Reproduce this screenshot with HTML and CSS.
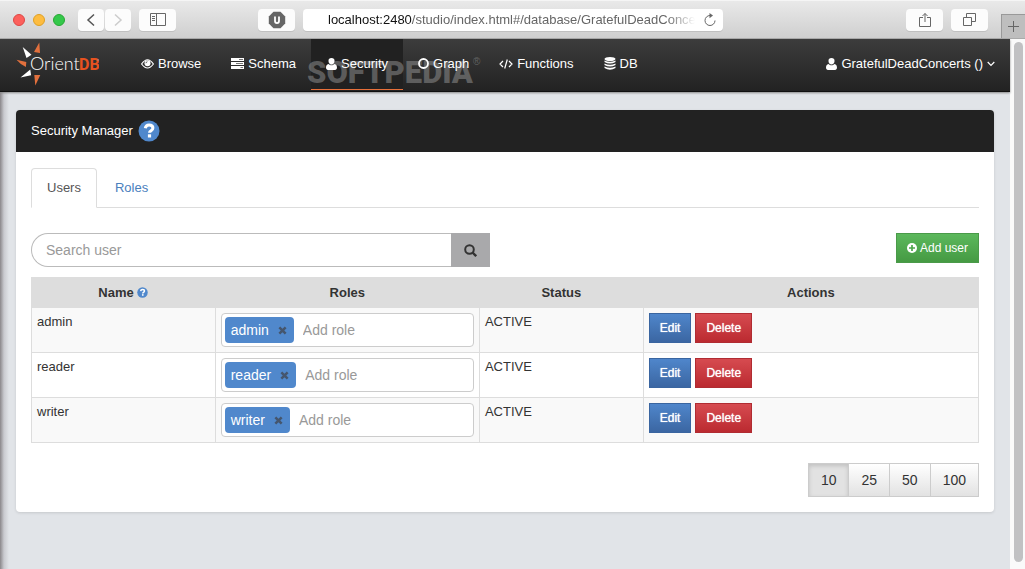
FILE: index.html
```html
<!DOCTYPE html>
<html lang="en">
<head>
<meta charset="utf-8">
<title>OrientDB Studio - Security Manager</title>
<link rel="stylesheet" href="styles.css">
</head>
<body>
<svg class="sprite" aria-hidden="true">
  <symbol id="i-user" viewBox="0 0 11 12"><path d="M5.500 0a3 3 0 0 1 3 3.200c0 1.700-1.300 3.300-3 3.300s-3-1.600-3-3.300a3 3 0 0 1 3-3.200zM2.600 6c.8.800 1.800 1.300 2.900 1.300S7.600 6.800 8.400 6C10.300 6.200 11 7.800 11 9.800c0 1.200-.8 2.200-2 2.200H2c-1.200 0-2-1-2-2.200C0 7.800.7 6.200 2.600 6z"/></symbol>
  <symbol id="i-help" viewBox="0 0 22 22"><circle cx="11" cy="11" r="10.500"/><path d="M7.300 8.300C7.600 5.900 9 4.900 11.100 4.900c2.200 0 3.800 1.200 3.800 3.100 0 2.700-3.400 2.600-3.400 4.800" fill="none" stroke="#fff" stroke-width="3"/><path d="M9.900 14.300h3.200v3.200H9.900z" fill="#fff"/></symbol>
  <symbol id="i-x" viewBox="0 0 10 10"><path d="M1.500 1.500l7 7m0-7l-7 7" stroke="currentColor" stroke-width="2.800"/></symbol>
</svg>

<header class="chrome">
  <div class="lights"><span class="light red"></span><span class="light yellow"></span><span class="light green"></span></div>
  <div class="history">
    <button class="tool small" aria-label="Back"><svg width="10" height="14" viewBox="0 0 10 14"><path d="M8 1.500L2 7l6 5.500" class="line strong"/></svg></button>
    <button class="tool small" aria-label="Forward"><svg width="10" height="14" viewBox="0 0 10 14"><path d="M2 1.500L8 7l-6 5.500" class="line faint"/></svg></button>
  </div>
  <button class="tool sidebar" aria-label="Sidebar"><svg width="16" height="13" viewBox="0 0 16 13"><path d="M.5.500h15v12H.5zM6.500.500v12M2 3.500h3M2 5.500h3M2 7.500h3" class="line"/></svg></button>
  <button class="tool shield" aria-label="Blocker"><svg width="18" height="18" viewBox="0 0 18 18"><path d="M5.500.800h7l4.700 4.700v7l-4.700 4.700h-7L.8 12.500v-7z" fill="#666"/><path d="M7 5.500V10c0 2.700 4 2.700 4 0V5.500" fill="none" stroke="#fff" stroke-width="1.800"/></svg></button>
  <div class="address">
    <span class="url"><b>localhost:2480</b>/studio/index.html#/database/GratefulDeadConcerts</span>
    <button class="reload" aria-label="Reload"><svg width="14" height="14" viewBox="0 0 14 14"><path d="M8.500 2.500H7a5 5 0 1 0 5 5" class="line"/><path d="M6.500 0l3.500 2.600-3.500 2.600z" fill="#666"/></svg></button>
  </div>
  <div class="right-tools">
    <button class="tool" aria-label="Share"><svg width="12" height="16" viewBox="0 0 12 16"><path d="M4 5.500H.5v9h11v-9H8M6 10V1.500M3.500 4L6 1.500 8.500 4" class="line"/></svg></button>
    <button class="tool" aria-label="Tabs"><svg width="13" height="13" viewBox="0 0 13 13"><path d="M.5 4.500h8v8h-8zM3.500 4V.5h9v8H9" class="line"/></svg></button>
  </div>
  <button class="newtab" aria-label="New tab"><svg width="11" height="11" viewBox="0 0 11 11"><path d="M5.500 0v11M0 5.500h11" class="line"/></svg></button>
</header>

<div class="viewport">
  <div class="page">
    <nav class="navbar">
      <a class="brand" href="#" aria-label="OrientDB">
        <svg width="84" height="46" viewBox="0 0 84 46">
          <g fill="#e2703d"><path d="M24.300.500L25 11l-6-1zM1.500 17.700L11.300 20l-.4 5Q6 23 1.500 17.700zM19.300 33h6l-5 10.500z"/></g>
          <g fill="#fff"><path d="M7.700 5l8.800 7.700-5 3.200zM5.500 35.600l9.800-8 .8 5.600z"/></g>
          <text x="15" y="28" class="logo-light">Orient</text>
          <text x="64" y="28" class="logo-bold">DB</text>
          <circle cx="83" cy="18" r=".8" fill="#999"/>
        </svg>
      </a>
      <a class="item" href="#"><svg width="13" height="10" viewBox="0 0 13 10"><path d="M.6 5Q6.500-3.500 12.400 5 6.500 13 .6 5z" fill="none" stroke="#fff" stroke-width="1.200"/><circle cx="6.500" cy="4.300" r="3" fill="#fff"/><path d="M5 4.200Q5 2.800 6.400 2.700" stroke="#333" fill="none" stroke-width=".8"/></svg>Browse</a>
      <a class="item" href="#"><svg width="13" height="11" viewBox="0 0 13 11"><path d="M0 0h13v3H0zM0 4h13v3H0zM0 8h13v3H0z" fill="#fff"/><path d="M8 1.500h4M5 5.500h7M9.500 9.500H12" stroke="#777"/></svg>Schema</a>
      <a class="item active" href="#" aria-current="page"><svg width="11" height="12"><use href="#i-user"/></svg>Security</a>
      <a class="item" href="#"><svg width="11" height="11" viewBox="0 0 11 11"><circle cx="5.500" cy="5.500" r="4.500" fill="none" stroke="#fff" stroke-width="1.800"/></svg>Graph</a>
      <a class="item" href="#"><svg width="14" height="10" viewBox="0 0 14 10"><path d="M4 2L1 5l3 3M10 2l3 3-3 3M8.300.500L5.700 9.500" fill="none" stroke="#fff" stroke-width="1.200"/></svg>Functions</a>
      <a class="item" href="#"><svg width="12" height="13" viewBox="0 0 12 13"><g fill="#fff"><ellipse cx="6" cy="2" rx="5.500" ry="2"/><path d="M.5 3.500q5.500 2.600 11 0v1.600q-5.500 3-11 0zM.5 6.500q5.500 2.600 11 0v1.600q-5.500 3-11 0zM.5 9.500q5.500 2.600 11 0v1.600q-5.500 3.300-11 0z"/></g></svg>DB</a>
      <a class="item account" href="#"><svg width="11" height="12"><use href="#i-user"/></svg>GratefulDeadConcerts ()<svg width="8" height="6" viewBox="0 0 8 6"><path d="M.7 1L4 4.500 7.300 1" fill="none" stroke="#fff" stroke-width="1.200"/></svg></a>
      <span class="watermark">SOFTPEDIA<sup>®</sup></span>
    </nav>

    <main class="panel">
      <h1 class="panel-title">Security Manager <svg class="help" width="22" height="22"><use href="#i-help"/></svg></h1>
      <div class="panel-body">
        <div class="tabs"><a class="tab current" href="#">Users</a><a class="tab" href="#">Roles</a></div>
        <div class="controls">
          <form class="search">
            <input type="text" placeholder="Search user" aria-label="Search user">
            <button type="button" aria-label="Search"><svg width="13" height="13" viewBox="0 0 13 13"><circle cx="5.500" cy="5.500" r="4.300" fill="none" stroke="#333" stroke-width="2"/><path d="M8.500 8.500l3.700 3.700" stroke="#333" stroke-width="2.400"/></svg></button>
          </form>
          <button class="btn green"><svg width="10" height="10" viewBox="0 0 10 10"><circle cx="5" cy="5" r="5" fill="#fff"/><path d="M5 2v6M2 5h6" stroke="#4ea64c" stroke-width="1.700"/></svg>Add user</button>
        </div>
        <table class="users">
          <colgroup><col class="c-name"><col class="c-roles"><col class="c-status"><col></colgroup>
          <thead><tr><th>Name <svg class="help small" width="11" height="11"><use href="#i-help"/></svg></th><th>Roles</th><th>Status</th><th>Actions</th></tr></thead>
          <tbody>
            <tr><td>admin</td><td><div class="roles"><span class="chip">admin<button aria-label="Remove admin"><svg width="9" height="9"><use href="#i-x"/></svg></button></span><input type="text" placeholder="Add role" aria-label="Add role to admin"></div></td><td>ACTIVE</td><td><div class="actions"><button class="btn blue">Edit</button><button class="btn red">Delete</button></div></td></tr>
            <tr><td>reader</td><td><div class="roles"><span class="chip">reader<button aria-label="Remove reader"><svg width="9" height="9"><use href="#i-x"/></svg></button></span><input type="text" placeholder="Add role" aria-label="Add role to reader"></div></td><td>ACTIVE</td><td><div class="actions"><button class="btn blue">Edit</button><button class="btn red">Delete</button></div></td></tr>
            <tr><td>writer</td><td><div class="roles"><span class="chip">writer<button aria-label="Remove writer"><svg width="9" height="9"><use href="#i-x"/></svg></button></span><input type="text" placeholder="Add role" aria-label="Add role to writer"></div></td><td>ACTIVE</td><td><div class="actions"><button class="btn blue">Edit</button><button class="btn red">Delete</button></div></td></tr>
          </tbody>
        </table>
        <div class="pager"><button class="on">10</button><button>25</button><button>50</button><button>100</button></div>
      </div>
    </main>
  </div>
  <div class="scrollbar"><div class="thumb"></div></div>
</div>
</body>
</html>
```

FILE: styles.css
```css
* { box-sizing: border-box; }
body {
  margin: 0;
  min-height: 100vh;
  display: flex;
  flex-direction: column;
  font: 13px/18px "Liberation Sans", Arial, sans-serif;
  color: #333;
  background: #fff;
}
button, input { font: inherit; color: inherit; margin: 0; }
button { border: 0; padding: 0; background: none; }
a { text-decoration: none; color: inherit; }
svg { flex: none; }
.sprite { position: absolute; width: 0; height: 0; }
.line { fill: none; stroke: #666; stroke-width: 1; }
.line.strong { stroke: #555; stroke-width: 1.500; }
.line.faint { stroke: #ccc; stroke-width: 1.500; }

/* Browser toolbar */
.chrome {
  display: flex;
  align-items: center;
  height: 39px;
  padding-left: 13px;
  background: linear-gradient(#e9e9e9, #cfcfcf);
  border-top: 1px solid #f5f5f5;
  border-bottom: 1px solid #aaa;
}
.lights { display: flex; gap: 8px; }
.light { width: 12px; height: 12px; border-radius: 50%; border: 1px solid; }
.light.red { background: #fc605c; border-color: #dd4744; }
.light.yellow { background: #fdbc40; border-color: #dfa023; }
.light.green { background: #34c84a; border-color: #27a733; }
.history { display: flex; gap: 1px; margin-left: 13px; }
.tool {
  display: flex;
  align-items: center;
  justify-content: center;
  width: 37px;
  height: 22px;
  background: #fcfcfc;
  border-radius: 4px;
  box-shadow: 0 1px 0 #c0c0c0;
}
.tool.small { width: 26px; }
.sidebar { margin-left: 8px; }
.shield { margin-left: 82px; }
.address {
  display: flex;
  align-items: center;
  flex: 0 1 420px;
  min-width: 0;
  height: 22px;
  margin-left: 8px;
  padding: 0 6px 0 25px;
  background: #fff;
  border-radius: 4px;
  box-shadow: 0 1px 0 #c0c0c0;
}
.url {
  flex: 1;
  overflow: hidden;
  white-space: nowrap;
  color: #666;
  mask-image: linear-gradient(to left, transparent 8px, #000 36px);
}
.url b { font-weight: normal; color: #111; }
.reload { display: flex; }
.right-tools { display: flex; gap: 8px; margin-left: auto; margin-right: 13px; }
.newtab {
  display: flex;
  align-items: center;
  justify-content: center;
  align-self: flex-end;
  width: 24px;
  height: 24px;
  background: #bebebe;
  border: solid #999;
  border-width: 1px 0 0 1px;
}

.viewport { display: flex; flex: 1; }
.page {
  flex: 1;
  min-width: 0;
  background: linear-gradient(to right, #8a878a, #c9cacf 4px, #e1e4e8 9px);
}
.scrollbar { width: 15px; padding: 3px 2px 7px 4px; background: #fafafa; display: flex; }
.thumb { flex: 1; border-radius: 5px; background: #c1c1c3; }

/* Application navigation */
.navbar {
  position: relative;
  isolation: isolate;
  display: flex;
  align-items: flex-start;
  height: 53px;
  padding-left: 15px;
  color: #fff;
  fill: #fff;
  background: linear-gradient(#3c3c3c, #222);
  border-bottom: 1px solid #111;
  box-shadow: 0 1px 2px #888;
}
.brand { display: flex; width: 111px; padding-top: 3px; }
.logo-light { font: 300 18px "Lato", sans-serif; fill: #fff; }
.logo-bold { font: 700 16px Roboto, sans-serif; fill: #e8521f; }
.item {
  position: relative;
  display: flex;
  align-items: center;
  gap: 4px;
  height: 51px;
  padding: 0 15px 2px;
}
.item.active::before {
  content: "";
  position: absolute;
  inset: 0;
  z-index: -2;
  background: #212121;
  border-bottom: 1px solid #e8703a;
}
.account { margin-left: auto; }
.watermark {
  position: absolute;
  left: 307px;
  top: 15px;
  z-index: -1;
  font: 900 31px/38px Roboto, sans-serif;
  color: rgba(150, 150, 150, .5);
  pointer-events: none;
}
.watermark sup { position: absolute; top: 2px; left: 100%; font: 10px/12px "Liberation Sans", sans-serif; }

/* Panel */
.panel {
  margin: 18px 16px 56px;
  background: #fff;
  border-radius: 4px;
  box-shadow: 0 1px 3px rgba(0, 0, 0, .12);
}
.panel-title {
  display: flex;
  align-items: center;
  gap: 5px;
  height: 42px;
  margin: 0;
  padding: 0 15px;
  font-size: 13px;
  font-weight: normal;
  color: #fff;
  background: #222;
  border-radius: 4px 4px 0 0;
}
.help { fill: #5088cc; }
.help.small { vertical-align: -1px; }
.panel-body { padding: 16px 15px 15px; }
.tabs { display: flex; gap: 2px; border-bottom: 1px solid #ddd; }
.tab {
  padding: 10px 15px;
  margin-bottom: -1px;
  border: 1px solid transparent;
  border-radius: 4px 4px 0 0;
  color: #4a80bd;
}
.tab.current { color: #555; background: #fff; border-color: #ddd #ddd #fff; }
.controls {
  display: grid;
  grid-template-columns: 1fr 1fr;
  gap: 30px;
  align-items: start;
  margin: 25px 0 10px;
}
.search { display: flex; height: 34px; }
.search input {
  flex: 1;
  min-width: 0;
  padding: 0 14px;
  font-size: 14px;
  border: 1px solid #bbb;
  border-right: 0;
  border-radius: 17px 0 0 17px;
}
.search button {
  display: flex;
  align-items: center;
  justify-content: center;
  width: 39px;
  background: #a9a9ab;
}
::placeholder { color: #999; opacity: 1; }
.btn {
  display: flex;
  align-items: center;
  gap: 3px;
  height: 30px;
  padding: 0 10px;
  font-size: 12px;
  color: #fff;
  border: 1px solid;
}
.btn.green { justify-self: end; background: linear-gradient(#5cb85c, #459a43); border-color: #4a9a49; }
.btn.blue { background: linear-gradient(#4f86cb, #3b66a2); border-color: #3a65a0; }
.btn.red { background: linear-gradient(#d64b50, #bb2a30); border-color: #b02c32; }
.actions .btn { text-shadow: 0 0 1px #fff; }

.users { width: 100%; table-layout: fixed; border-collapse: collapse; }
.c-name { width: 19.4%; }
.c-roles { width: 27.9%; }
.c-status { width: 17.3%; }
.users th { height: 30px; padding: 0 5px; background: #ddd; border: 1px solid #ddd; }
.users td { padding: 5px; vertical-align: top; border: 1px solid #ddd; }
.users tbody tr:nth-child(odd) { background: #f9f9f9; }
.roles {
  display: flex;
  align-items: center;
  gap: 9px;
  height: 34px;
  padding: 0 3px;
  font-size: 14px;
  background: #fff;
  border: 1px solid #ccc;
  border-radius: 4px;
}
.roles input { flex: 1; min-width: 0; padding: 0; border: 0; background: none; }
.chip {
  display: flex;
  align-items: center;
  gap: 9px;
  height: 26px;
  padding: 0 7px 0 6px;
  color: #fff;
  background: #5088cc;
  border-radius: 4px;
}
.chip button { display: flex; color: #45566e; }
.actions { display: flex; gap: 4px; }

.pager { display: flex; justify-content: flex-end; margin-top: 20px; }
.pager button {
  height: 34px;
  padding: 0 12px;
  margin-left: -1px;
  font-size: 14px;
  border: 1px solid #ccc;
  background: linear-gradient(#fff, #e2e2e2);
}
.pager .on { background: #e2e2e2; box-shadow: inset 0 2px 4px rgba(0, 0, 0, .15); }
```
